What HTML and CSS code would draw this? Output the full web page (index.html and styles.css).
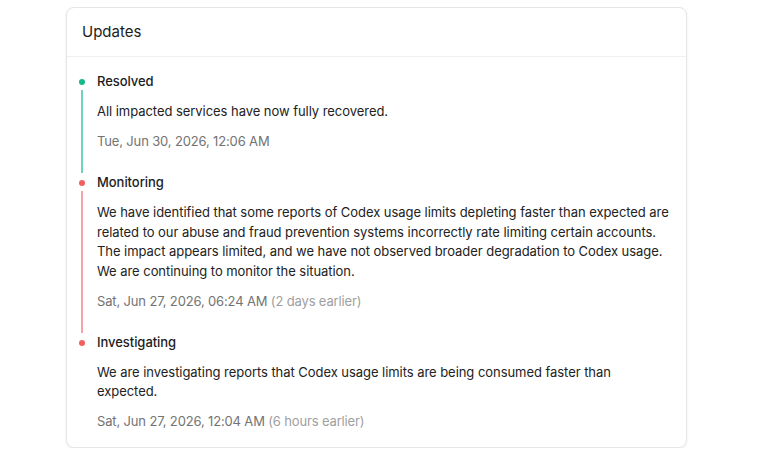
FILE: index.html
```html
<!DOCTYPE html>
<html lang="en">
<head>
<meta charset="utf-8">
<link rel="stylesheet" href="styles.css">
</head>
<body>
<div class="page">
  <section class="card">
    <header class="card-header">Updates</header>
    <ol class="timeline">
      <li class="item resolved">
        <div class="rail"><span class="dot"></span><span class="line"></span></div>
        <div class="content">
          <div class="title">Resolved</div>
          <p class="body">All impacted services have now fully recovered.</p>
          <div class="date">Tue, Jun 30, 2026, 12:06 AM</div>
        </div>
      </li>
      <li class="item monitoring">
        <div class="rail"><span class="dot"></span><span class="line"></span></div>
        <div class="content">
          <div class="title">Monitoring</div>
          <p class="body">We have identified that some reports of Codex usage limits depleting faster than expected are related to our abuse and fraud prevention systems incorrectly rate limiting certain accounts. The impact appears limited, and we have not observed broader degradation to Codex usage. We are continuing to monitor the situation.</p>
          <div class="date">Sat, Jun 27, 2026, 06:24 AM <span class="rel">(2 days earlier)</span></div>
        </div>
      </li>
      <li class="item investigating last">
        <div class="rail"><span class="dot"></span></div>
        <div class="content">
          <div class="title">Investigating</div>
          <p class="body">We are investigating reports that Codex usage limits are being consumed faster than expected.</p>
          <div class="date">Sat, Jun 27, 2026, 12:04 AM <span class="rel">(6 hours earlier)</span></div>
        </div>
      </li>
    </ol>
  </section>
</div>
</body>
</html>
```

FILE: styles.css
```css
html, body {
  margin: 0;
  padding: 0;
  background: #ffffff;
}
body {
  font-family: Inter, "Noto Sans", sans-serif;
  color: #1f1f1f;
}
.page {
  padding: 7px 0 0 66px;
}
.card {
  width: 619px;
  border: 1px solid #e6e6e6;
  border-radius: 8px;
  box-shadow: 0 1px 3px rgba(0, 0, 0, 0.07);
  background: #fff;
}
.card-header {
  font-size: 15px;
  line-height: 20px;
  padding: 14px 15px 14px 15px;
  border-bottom: 1px solid #f0f0f0;
  font-weight: 400;
  color: #1c1c1c;
}
.timeline {
  list-style: none;
  margin: 0;
  padding: 15px 14px 15px 12px;
}
.item {
  display: flex;
  gap: 12px;
}
.rail {
  width: 6px;
  display: flex;
  flex-direction: column;
  align-items: flex-start;
  padding-top: 7px;
}
.dot {
  width: 6px;
  height: 6px;
  border-radius: 50%;
  flex: none;
}
.line {
  width: 2px;
  flex: 1;
  margin: 5px 0 0 2px;
}
.resolved .dot { background: #14b88a; }
.resolved .line { background: #6fd3bb; }
.monitoring .dot, .investigating .dot { background: #f25f5f; }
.monitoring .line { background: #f6a3a3; }
.content {
  flex: 1;
  padding-bottom: 21.5px;
  letter-spacing: -0.05px;
}
.last .content {
  padding-bottom: 0;
}
.title {
  font-size: 13px;
  line-height: 19.5px;
  font-weight: 500;
  color: #1c1c1c;
}
.body {
  margin: 10.5px 0 0 0;
  font-size: 13px;
  line-height: 19.5px;
  color: #222;
}
.date {
  margin-top: 10.5px;
  font-size: 13px;
  line-height: 19.5px;
  color: #737373;
  letter-spacing: -0.15px;
}
.rel {
  color: #a0a0a0;
}
```
